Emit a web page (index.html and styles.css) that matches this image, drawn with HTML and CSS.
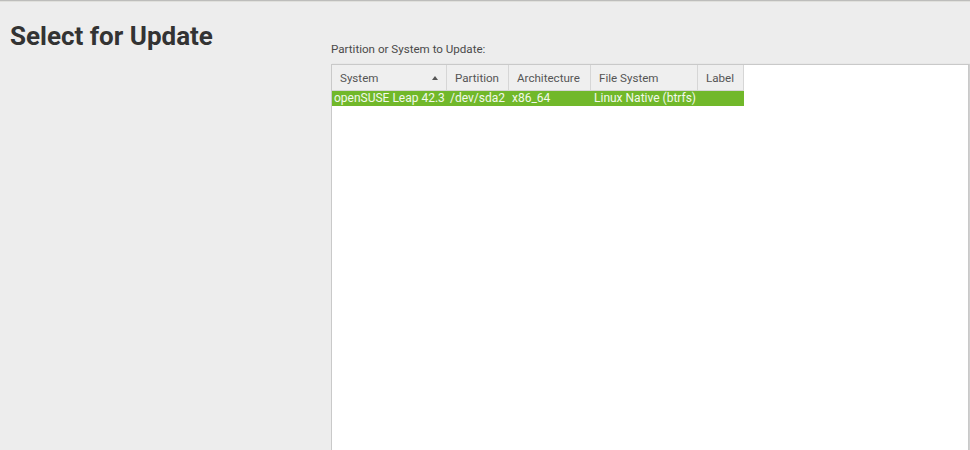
FILE: index.html
```html
<!DOCTYPE html>
<html>
<head>
<meta charset="utf-8">
<link rel="stylesheet" href="styles.css">
</head>
<body>
<div class="topline"></div>
<div class="page">
  <div class="side">
    <h1 class="title">Select for Update</h1>
  </div>
  <div class="main">
    <div class="label">Partition or System to Update:</div>
    <div class="listbox">
      <table class="systems">
        <colgroup>
          <col class="c1"><col class="c2"><col class="c3"><col class="c4"><col class="c5">
        </colgroup>
        <thead>
          <tr>
            <th><span class="sorthead">System<span class="sortarrow"></span></span></th>
            <th>Partition</th>
            <th>Architecture</th>
            <th>File System</th>
            <th>Label</th>
          </tr>
        </thead>
        <tbody>
          <tr class="selected">
            <td class="first">openSUSE Leap 42.3</td>
            <td>/dev/sda2</td>
            <td>x86_64</td>
            <td>Linux Native (btrfs)</td>
            <td></td>
          </tr>
        </tbody>
      </table>
    </div>
  </div>
</div>
</body>
</html>
```
FILE: styles.css
```css
html, body {
  margin: 0;
  padding: 0;
  background: #ededed;
  font-family: Roboto, "Noto Sans", sans-serif;
  overflow: hidden;
}
body {
  height: 450px;
  display: flex;
  flex-direction: column;
}
.topline {
  flex: none;
  height: 1px;
  background: #e0e0dc;
  border-top: 1px solid #bdbdbb;
}
.page {
  flex: 1;
  display: flex;
  min-height: 0;
}
.side {
  width: 321px;
  padding-left: 10px;
  flex: none;
}
.title {
  margin: 19px 0 0 0;
  font-size: 26px;
  line-height: 30px;
  font-weight: 700;
  color: #333333;
}
.main {
  flex: 1;
  padding-top: 41px;
  display: flex;
  flex-direction: column;
  min-height: 0;
}
.label {
  font-size: 11.6px;
  line-height: 13px;
  color: #4a4a4a;
  margin-bottom: 8px;
}
.listbox {
  flex: 1;
  margin-right: 1px;
  background: #ffffff;
  border: 1px solid #c9c9c9;
  border-bottom: none;
  box-shadow: 1px 0 1px rgba(0, 0, 0, 0.12);
}
.systems {
  border-collapse: separate;
  border-spacing: 0;
  table-layout: fixed;
  width: 412px;
  font-size: 12px;
}
.c1 { width: 115px; }
.c2 { width: 62px; }
.c3 { width: 82px; }
.c4 { width: 107px; }
.c5 { width: 46px; }
.systems th {
  height: 25px;
  padding: 0 7px 0 8px;
  text-align: left;
  font-weight: 400;
  font-size: 11.6px;
  color: #555555;
  background: #efefef;
  border-right: 1px solid #d6d6d6;
  border-bottom: 1px solid #d6d6d6;
  white-space: nowrap;
  overflow: hidden;
}
.sorthead {
  display: flex;
  justify-content: space-between;
  align-items: center;
}
.sortarrow {
  width: 0;
  height: 0;
  border-left: 3px solid transparent;
  border-right: 3px solid transparent;
  border-bottom: 4px solid #555555;
  margin-right: 1px;
}
.systems td {
  height: 15px;
  line-height: 15px;
  padding: 0 3px;
  white-space: nowrap;
  overflow: hidden;
}
.systems td.first {
  padding-left: 2px;
}
.selected td {
  background: #71b82a;
  color: #f3f9ec;
}
```
